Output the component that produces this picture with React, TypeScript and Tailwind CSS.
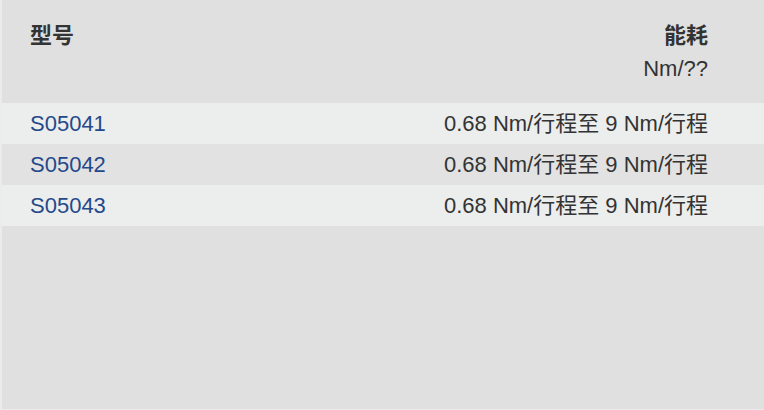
const rows = [
  { model: "S05041", energy: "0.68 Nm/行程至 9 Nm/行程" },
  { model: "S05042", energy: "0.68 Nm/行程至 9 Nm/行程" },
  { model: "S05043", energy: "0.68 Nm/行程至 9 Nm/行程" },
];

export default function App() {
  return (
    <div
      className="h-[410px] w-[764px] bg-[#ebebeb] pl-[2px] pb-[1px] text-[22px] leading-[33px] text-[#333333]"
      style={{ fontFamily: '"Liberation Sans", "Noto Sans CJK SC", sans-serif' }}
    >
      <div className="h-full bg-[#e0e0e0]">
        {/* header */}
        <div className="flex justify-between pl-[28px] pr-[56px] pt-[19px] pb-[18px] font-bold">
          <div>型号</div>
          <div className="text-right">
            <div>能耗</div>
            <div className="font-normal">Nm/??</div>
          </div>
        </div>
        {rows.map((r, i) => (
          <div
            key={r.model}
            className={
              "flex justify-between py-[4px] pl-[28px] pr-[56px] " +
              (i % 2 === 0 ? "bg-[#eceded]" : "bg-[#e2e2e2]")
            }
          >
            <span className="text-[#24498a]">{r.model}</span>
            <span>{r.energy}</span>
          </div>
        ))}
      </div>
    </div>
  );
}
